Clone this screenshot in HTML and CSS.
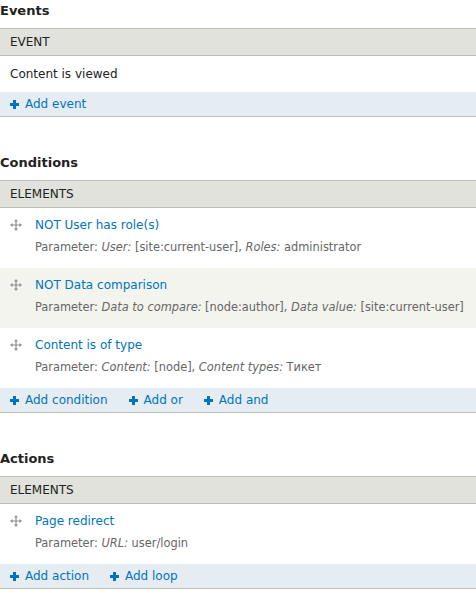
FILE: index.html
```html
<!DOCTYPE html>
<html>
<head>
<meta charset="utf-8">
<link rel="stylesheet" href="styles.css">
</head>
<body>
<section class="block">
  <h2 class="block-title">Events</h2>
  <div class="tbl">
    <div class="tbl-head">EVENT</div>
    <div class="tbl-row plain">Content is viewed</div>
    <div class="tbl-foot">
      <a class="add"><svg class="plus" viewBox="0 0 9 9"><path d="M3 0h3v3h3v3H6v3H3V6H0V3h3z"/></svg>Add event</a>
    </div>
  </div>
</section>

<section class="block">
  <h2 class="block-title">Conditions</h2>
  <div class="tbl">
    <div class="tbl-head">ELEMENTS</div>
    <div class="tbl-row item">
      <svg class="drag" viewBox="0 0 12 12"><path d="M6 0L8 2.5H6.6V5.4H9.5V4L12 6L9.5 8V6.6H6.6V9.5H8L6 12L4 9.5H5.4V6.6H2.5V8L0 6L2.5 4V5.4H5.4V2.5H4Z"/></svg>
      <div class="item-body">
        <a class="item-title">NOT User has role(s)</a>
        <div class="param">Parameter: <em>User:</em> [site:current-user], <em>Roles:</em> administrator</div>
      </div>
    </div>
    <div class="tbl-row item even">
      <svg class="drag" viewBox="0 0 12 12"><path d="M6 0L8 2.5H6.6V5.4H9.5V4L12 6L9.5 8V6.6H6.6V9.5H8L6 12L4 9.5H5.4V6.6H2.5V8L0 6L2.5 4V5.4H5.4V2.5H4Z"/></svg>
      <div class="item-body">
        <a class="item-title">NOT Data comparison</a>
        <div class="param">Parameter: <em>Data to compare:</em> [node:author], <em>Data value:</em> [site:current-user]</div>
      </div>
    </div>
    <div class="tbl-row item">
      <svg class="drag" viewBox="0 0 12 12"><path d="M6 0L8 2.5H6.6V5.4H9.5V4L12 6L9.5 8V6.6H6.6V9.5H8L6 12L4 9.5H5.4V6.6H2.5V8L0 6L2.5 4V5.4H5.4V2.5H4Z"/></svg>
      <div class="item-body">
        <a class="item-title">Content is of type</a>
        <div class="param">Parameter: <em>Content:</em> [node], <em>Content types:</em> Тикет</div>
      </div>
    </div>
    <div class="tbl-foot">
      <a class="add"><svg class="plus" viewBox="0 0 9 9"><path d="M3 0h3v3h3v3H6v3H3V6H0V3h3z"/></svg>Add condition</a>
      <a class="add"><svg class="plus" viewBox="0 0 9 9"><path d="M3 0h3v3h3v3H6v3H3V6H0V3h3z"/></svg>Add or</a>
      <a class="add"><svg class="plus" viewBox="0 0 9 9"><path d="M3 0h3v3h3v3H6v3H3V6H0V3h3z"/></svg>Add and</a>
    </div>
  </div>
</section>

<section class="block">
  <h2 class="block-title">Actions</h2>
  <div class="tbl">
    <div class="tbl-head">ELEMENTS</div>
    <div class="tbl-row item">
      <svg class="drag" viewBox="0 0 12 12"><path d="M6 0L8 2.5H6.6V5.4H9.5V4L12 6L9.5 8V6.6H6.6V9.5H8L6 12L4 9.5H5.4V6.6H2.5V8L0 6L2.5 4V5.4H5.4V2.5H4Z"/></svg>
      <div class="item-body">
        <a class="item-title">Page redirect</a>
        <div class="param">Parameter: <em>URL:</em> user/login</div>
      </div>
    </div>
    <div class="tbl-foot">
      <a class="add"><svg class="plus" viewBox="0 0 9 9"><path d="M3 0h3v3h3v3H6v3H3V6H0V3h3z"/></svg>Add action</a>
      <a class="add"><svg class="plus" viewBox="0 0 9 9"><path d="M3 0h3v3h3v3H6v3H3V6H0V3h3z"/></svg>Add loop</a>
    </div>
  </div>
</section>
</body>
</html>
```

FILE: styles.css
```css
html, body {
  margin: 0;
  padding: 0;
  background: #fff;
}
body {
  font-family: "DejaVu Sans", "Liberation Sans", sans-serif;
  font-size: 12px;
  line-height: 18px;
  color: #000;
}
.block {
  margin-bottom: 35px;
}
.block-title {
  margin: 0;
  font-size: 13px;
  font-weight: bold;
  line-height: 18px;
  padding: 2px 0 8px;
  color: #222;
}
.tbl {
  border-bottom: 1px solid #bebfb9;
}
.tbl-head {
  background: #e1e2dc;
  border-top: 1px solid #bebfb9;
  border-bottom: 1px solid #bebfb9;
  padding: 4px 10px;
  text-transform: uppercase;
  color: #222;
}
.tbl-row.plain {
  padding: 9px 10px;
  color: #222;
}
.tbl-row.item {
  display: flex;
  align-items: flex-start;
  padding: 8px 10px 12px;
}
.tbl-row.even {
  background: #f3f4ee;
}
.drag {
  width: 12px;
  height: 12px;
  fill: #8f8f8f;
  margin-top: 3px;
  margin-right: 13px;
  flex: none;
}
.item-body {
  display: flex;
  flex-direction: column;
  gap: 5px;
}
.item-title {
  color: #0074bd;
}
.param {
  font-size: 11.4px;
  line-height: 17px;
  color: #666;
}
.param em {
  font-style: italic;
}
.tbl-foot {
  background: #e5ecf2;
  padding: 3px 10px;
  display: flex;
  gap: 21px;
}
.add {
  color: #0074bd;
  display: inline-flex;
  align-items: center;
}
.plus {
  width: 9px;
  height: 9px;
  fill: #0074bd;
  margin-right: 6px;
}
```
